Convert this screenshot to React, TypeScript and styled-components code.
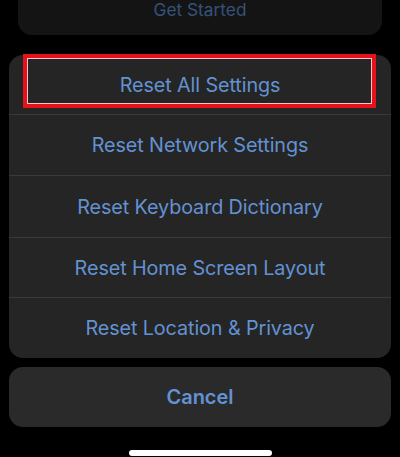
import styled, { createGlobalStyle } from 'styled-components';

const GlobalStyle = createGlobalStyle`
  html, body {
    margin: 0;
    padding: 0;
    background: #000;
  }
  body {
    font-family: Inter, "Liberation Sans", sans-serif;
    -webkit-font-smoothing: antialiased;
  }
`;

const Screen = styled.div`
  width: 400px;
  height: 457px;
  background: #000;
  display: flex;
  flex-direction: column;
  overflow: hidden;
`;

const BackCard = styled.div`
  margin: 0 18px;
  height: 35px;
  background: #141414;
  border-radius: 0 0 14px 14px;
  display: flex;
  justify-content: center;
  color: #34527c;
  font-size: 17.3px;
  line-height: 20px;
`;

const Sheet = styled.div`
  position: relative;
  margin: 20px 9px 0;
  background: #252525;
  border-radius: 14px;
  display: flex;
  flex-direction: column;
`;

const Row = styled.div<{ $h: number; $first?: boolean }>`
  height: ${(p) => p.$h}px;
  box-sizing: border-box;
  border-top: ${(p) => (p.$first ? 'none' : '1px solid #3a3a3c')};
  display: flex;
  align-items: center;
  justify-content: center;
  color: #6392d3;
  font-size: 19.8px;
  letter-spacing: -0.1px;
`;

const Highlight = styled.div`
  position: absolute;
  left: 14px;
  right: 15px;
  top: -1px;
  height: 54px;
  box-sizing: border-box;
  border: 4px solid #e3121b;
  box-shadow: inset 0 0 0 1px #f6c4c6;
  pointer-events: none;
`;

const CancelCard = styled.div`
  margin: 9px 9px 0;
  height: 60px;
  background: #2a2a2a;
  border-radius: 14px;
  display: flex;
  align-items: center;
  justify-content: center;
  color: #6392d3;
  font-size: 20px;
  font-weight: 600;
`;

const HomeBar = styled.div`
  margin: 23px auto 0;
  width: 143px;
  height: 6px;
  border-radius: 3px;
  background: #fff;
`;

const options = [
  { label: 'Reset All Settings', h: 59 },
  { label: 'Reset Network Settings', h: 61 },
  { label: 'Reset Keyboard Dictionary', h: 62 },
  { label: 'Reset Home Screen Layout', h: 60 },
  { label: 'Reset Location & Privacy', h: 61 },
];

const App = () => {
  return (
    <Screen>
      <GlobalStyle />
      <BackCard>Get Started</BackCard>
      <Sheet>
        {options.map((o, i) => (
          <Row key={o.label} $h={o.h} $first={i === 0}>
            {o.label}
          </Row>
        ))}
        <Highlight />
      </Sheet>
      <CancelCard>Cancel</CancelCard>
      <HomeBar />
    </Screen>
  );
};

export default App;
